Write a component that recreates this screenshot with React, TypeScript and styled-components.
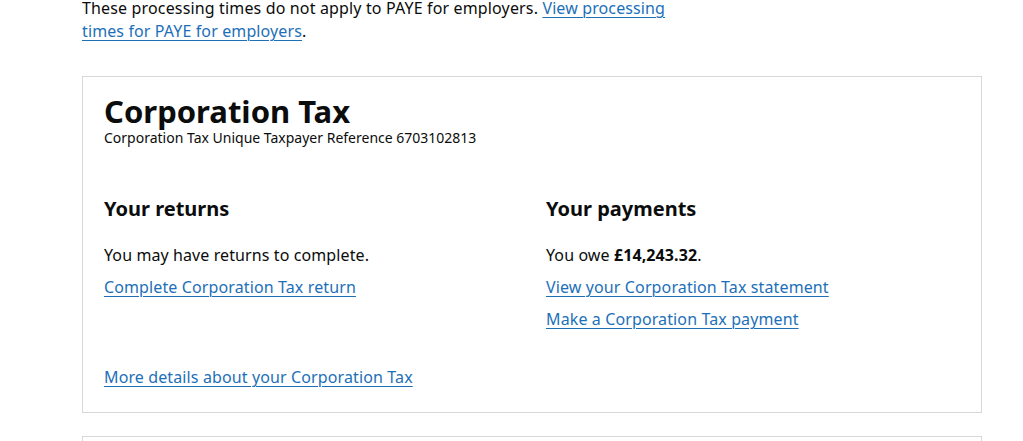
import React from "react";
import styled, { createGlobalStyle } from "styled-components";

const Global = createGlobalStyle`
  html, body { margin: 0; padding: 0; background: #ffffff; }
  body { font-family: "Noto Sans", Arial, sans-serif; color: #0b0c0c; }
`;

const Page = styled.div`
  padding: 0 41px 0 82px;
  margin-top: -3px;
`;

const Intro = styled.p`
  margin: 0 0 33px;
  max-width: 610px;
  font-size: 16px;
  line-height: 23px;
  letter-spacing: 0.15px;
`;

const Link = styled.a`
  color: #1d70b8;
  text-decoration: underline;
  text-decoration-thickness: 1px;
  text-underline-offset: 3px;
  font-size: 16px;
  line-height: 23px;
  letter-spacing: 0.12px;
`;

const Card = styled.section`
  border: 1px solid #d8d8d8;
  padding: 18px 21px 23px;
  margin-bottom: 23px;
`;

const Title = styled.h2`
  margin: 0;
  font-size: 31px;
  font-weight: 700;
  line-height: 33px;
`;

const Ref = styled.p`
  margin: 0 0 48px;
  font-size: 14px;
  line-height: 20px;
`;

const Columns = styled.div`
  display: grid;
  grid-template-columns: 1fr 1fr;
  column-gap: 28px;
  margin-bottom: 26px;
`;

const Column = styled.div`
  display: flex;
  flex-direction: column;
  align-items: flex-start;
`;

const Heading = styled.h3`
  margin: 0 0 22px;
  font-size: 20px;
  font-weight: 700;
  line-height: 26px;
`;

const Body = styled.p`
  margin: 0 0 9px;
  font-size: 16px;
  line-height: 23px;
  letter-spacing: 0.1px;
`;

const Item = styled.div`
  margin-bottom: 9px;
  line-height: 23px;
`;

const NextCard = styled.div`
  border: 1px solid #d8d8d8;
  border-bottom: none;
  height: 40px;
`;

export default function App() {
  return (
    <>
      <Global />
      <Page>
        <Intro>
          These processing times do not apply to PAYE for employers.{" "}
          <Link href="#">View processing times for PAYE for employers</Link>.
        </Intro>
        <Card>
          <Title>Corporation Tax</Title>
          <Ref>Corporation Tax Unique Taxpayer Reference 6703102813</Ref>
          <Columns>
            <Column>
              <Heading>Your returns</Heading>
              <Body>You may have returns to complete.</Body>
              <Item>
                <Link href="#">Complete Corporation Tax return</Link>
              </Item>
            </Column>
            <Column>
              <Heading>Your payments</Heading>
              <Body>
                You owe <strong>£14,243.32</strong>.
              </Body>
              <Item>
                <Link href="#">View your Corporation Tax statement</Link>
              </Item>
              <Item>
                <Link href="#">Make a Corporation Tax payment</Link>
              </Item>
            </Column>
          </Columns>
          <Link href="#">More details about your Corporation Tax</Link>
        </Card>
        <NextCard />
      </Page>
    </>
  );
}
